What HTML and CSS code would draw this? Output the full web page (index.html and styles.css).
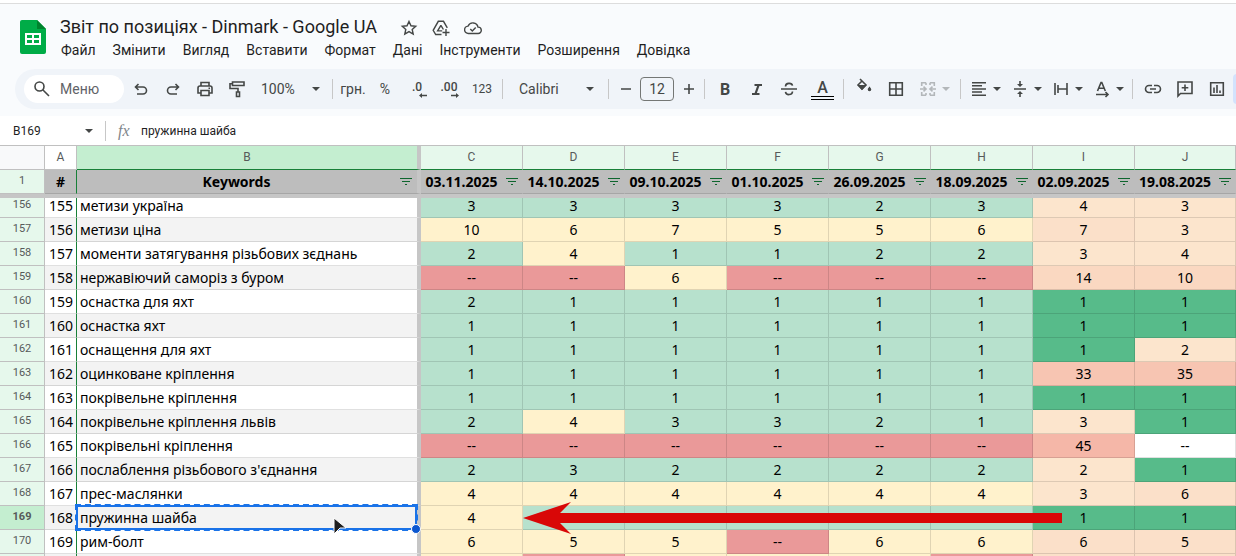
FILE: index.html
```
<!DOCTYPE html>
<html lang="uk">
<head>
    <meta charset="UTF-8">
    <meta name="viewport" content="width=device-width, initial-scale=1.0">
    <title>Звіт по позиціях - Dinmark - Google UA</title>
    <link rel="stylesheet" href="styles.css">
</head>
<body>
    <!-- Title and menus -->
    <header class="doc-header">
        <svg class="logo" viewBox="0 0 26 34" width="26" height="34">
            <path fill="#00ac47" d="M2 0h15l9 9v23a2 2 0 0 1-2 2H2a2 2 0 0 1-2-2V2a2 2 0 0 1 2-2z"/>
            <path fill="#00832d" d="M17 0l9 9h-9z"/>
            <path fill="#fff" fill-rule="evenodd" d="M5 13h16v12H5zM7 15v3h5v-3zM14 15v3h5v-3zM7 20v3h5v-3zM14 20v3h5v-3z"/>
        </svg>
        <div class="doc-info">
            <div class="title-row">
                <h1>Звіт по позиціях - Dinmark - Google UA</h1>
                <button class="title-btn" aria-label="Зірочка"><svg viewBox="0 0 18 18"><path class="line" d="M9 2.500l2 4.300 4.700.5-3.500 3.100 1 4.600L9 12.600 4.800 15l1-4.600-3.500-3.100 4.700-.5z"/></svg></button>
                <button class="title-btn" aria-label="Перемістити"><svg viewBox="0 0 18 18"><path class="line" d="M9.500 15.500H3.700L1.200 11.300 6.300 2.300h5.200l3.800 6.500M8.900 6.300l-3.300 5.600h4.600M8.900 6.300l2.500 4.200M14 10v7M10.500 13.500h7"/></svg></button>
                <button class="title-btn" aria-label="Статус документа"><svg viewBox="0 0 18 18"><path class="line" d="M4.500 14.500a3.700 3.700 0 0 1-.4-7.400 5.200 5.200 0 0 1 9.900 1 3.200 3.200 0 0 1 .2 6.400zM6.300 10l2 2 3.400-3.500"/></svg></button>
            </div>
            <nav class="menu">
                <a href="#">Файл</a>
                <a href="#">Змінити</a>
                <a href="#">Вигляд</a>
                <a href="#">Вставити</a>
                <a href="#">Формат</a>
                <a href="#">Дані</a>
                <a href="#">Інструменти</a>
                <a href="#">Розширення</a>
                <a href="#">Довідка</a>
            </nav>
        </div>
    </header>

    <!-- Toolbar -->
    <div class="toolbar">
        <label class="search">
            <svg viewBox="0 0 18 18"><path class="line bold" d="M11 6.500a4.500 4.500 0 1 1-9 0 4.500 4.500 0 0 1 9 0zM10 10l6 6"/></svg>
            <input type="text" placeholder="Меню" aria-label="Меню">
        </label>
        <button class="tool" aria-label="Скасувати"><svg viewBox="0 0 18 18"><path class="line bold" d="M6.500 4L3.500 7l3 3M3.700 7H11a3.300 3.300 0 0 1 0 7H5"/></svg></button>
        <button class="tool" aria-label="Повторити"><svg viewBox="0 0 18 18"><path class="line bold" d="M11.500 4l3 3-3 3M14.300 7H7a3.300 3.300 0 0 0 0 7h6"/></svg></button>
        <button class="tool" aria-label="Друк"><svg viewBox="0 0 18 18"><path class="line bold" d="M5 6V2.500h8V6M5 13H2V8a2 2 0 0 1 2-2h10a2 2 0 0 1 2 2v5h-3M5 10.500h8v5H5z"/><path d="M12.500 7.500h1.500V9h-1.500z"/></svg></button>
        <button class="tool" aria-label="Копіювати формат"><svg viewBox="0 0 18 18"><path class="line bold" d="M4.500 2h11.500v3.500H4.500zM4.500 3.700H2V8.500h8V12M8.500 12h3v4.500h-3z"/></svg></button>
        <span class="select zoom"><select aria-label="Масштаб"><option>100%</option></select></span>
        <span class="sep"></span>
        <button class="tool text">грн.</button>
        <button class="tool text">%</button>
        <button class="tool decimal" aria-label="Зменшити кількість десяткових знаків"><span>.0</span><svg viewBox="0 0 8 5"><path d="M0 2.500L3 0v1.700h5v1.600H3V5z"/></svg></button>
        <button class="tool decimal" aria-label="Збільшити кількість десяткових знаків"><span>.00</span><svg viewBox="0 0 8 5"><path d="M8 2.500L5 0v1.700H0v1.600h5V5z"/></svg></button>
        <button class="tool text small">123</button>
        <span class="sep"></span>
        <span class="select font"><select aria-label="Шрифт"><option>Calibri</option></select></span>
        <span class="sep"></span>
        <button class="tool step" aria-label="Зменшити розмір шрифту"><svg viewBox="0 0 18 18"><path d="M4 8.200h10v1.600H4z"/></svg></button>
        <input class="font-size" type="text" value="12" aria-label="Розмір шрифту">
        <button class="tool step" aria-label="Збільшити розмір шрифту"><svg viewBox="0 0 18 18"><path d="M4 8.200h4.200V4h1.600v4.200H14v1.600H9.800V14H8.200V9.800H4z"/></svg></button>
        <span class="sep"></span>
        <button class="tool glyph">B</button>
        <button class="tool" aria-label="Курсив"><svg viewBox="0 0 18 18"><path d="M6.500 4H14v2h-2.600l-2.500 7h2.600v2H4v-2h2.600l2.500-7H6.500z"/></svg></button>
        <button class="tool" aria-label="Закреслення"><svg viewBox="0 0 18 18"><path class="line bold" d="M1 9h16M5.500 6.500C5.500 2.500 12 2.500 12.500 5.700M5.500 11.800c.5 4 7 3.500 7-.3"/></svg></button>
        <button class="tool glyph color">A</button>
        <span class="sep"></span>
        <button class="tool" aria-label="Колір заливки"><svg class="fill-icon" viewBox="0 0 18 18"><path class="line bold" d="M5 1l6 6-4 4-4-4 4-4"/><path d="M2.500 7h9L7 12zM14.500 8.500s1.800 2 1.800 3a1.800 1.800 0 0 1-3.600 0c0-1 1.800-3 1.800-3z"/></svg></button>
        <button class="tool" aria-label="Межі"><svg viewBox="0 0 18 18"><path class="line bold" d="M2.700 2.700h12.600v12.600H2.700zM9 2.700v12.600M2.700 9h12.600"/></svg></button>
        <button class="tool split merge" aria-label="Об'єднати клітинки" disabled><svg viewBox="0 0 18 18"><path class="line bold" d="M7 2.700H2.700V6M11 2.700h4.300V6M2.700 12v3.300H7M15.300 12v3.300H11M7 2.700V5M11 2.700V5M7 15.300V13M11 15.300V13M1 9h5M17 9h-5M4.500 6.700L7 9l-2.500 2.300M13.500 6.700L11 9l2.500 2.300"/></svg></button>
        <span class="sep"></span>
        <button class="tool split" aria-label="Горизонтальне вирівнювання"><svg viewBox="0 0 18 18"><path d="M2 2h14v1.500H2zM2 5.100h10v1.500H2zM2 8.200h14v1.500H2zM2 11.300h10v1.500H2zM2 14.400h14v1.500H2z"/></svg></button>
        <button class="tool split" aria-label="Вертикальне вирівнювання"><svg viewBox="0 0 18 18"><path d="M3 8.200h12v1.600H3zM8.200 1h1.600v3H12L9 7 6 4h2.200zM8.200 17h1.600v-3H12l-3-3-3 3h2.200z"/></svg></button>
        <button class="tool split" aria-label="Перенесення тексту"><svg viewBox="0 0 18 18"><path class="line bold" d="M3 3v12M15 3v12M6 9h9M6 5v8"/></svg></button>
        <button class="tool split" aria-label="Поворот тексту"><svg viewBox="0 0 18 18"><path class="line bold" d="M4.500 11L8 2.500h.8l3.500 8.500M5.800 8.300h5.200M3 14.500h12M12.500 12l2.500 2.500-2.500 2.500"/></svg></button>
        <span class="sep"></span>
        <button class="tool" aria-label="Вставити посилання"><svg viewBox="0 0 18 18"><path class="line bold" d="M8 5.500H5a3.500 3.500 0 0 0 0 7h3M10 5.500h3a3.500 3.500 0 0 1 0 7h-3M6 9h6"/></svg></button>
        <button class="tool" aria-label="Додати коментар"><svg viewBox="0 0 18 18"><path class="line bold" d="M2 2h14v11.500H4.500L2 16zM9 4.500v6.500M5.700 7.700h6.600"/></svg></button>
        <button class="tool" aria-label="Вставити діаграму"><svg viewBox="0 0 18 18"><path class="line bold" d="M2.700 2.700h12.600v12.600H2.700zM6 7.500V13M9 5v8M12 10.500V13"/></svg></button>
        <button class="tool filter-on" aria-label="Фільтр"></button>
    </div>

    <!-- Formula bar -->
    <div class="formula-bar">
        <span class="select name-box"><input type="text" value="B169" aria-label="Поле назви"></span>
        <span class="sep"></span>
        <label class="fx" for="formula">fx</label>
        <input id="formula" type="text" value="пружинна шайба">
    </div>

    <!-- Sheet -->
    <main class="sheet">
        <table>
            <thead>
                <tr class="letters">
                    <th class="corner"></th>
                    <th class="col-a">A</th>
                    <th class="col-b">B</th>
                    <th>C</th>
                    <th>D</th>
                    <th>E</th>
                    <th>F</th>
                    <th>G</th>
                    <th>H</th>
                    <th>I</th>
                    <th>J</th>
                </tr>
                <tr class="titles" id="titles">
                    <th class="row-num">1</th>
                    <th class="col-a">#</th>
                </tr>
            </thead>
            <tbody id="rows"></tbody>
        </table>
        <div class="freeze"></div>
        <svg class="arrow" viewBox="0 0 540 32" width="540" height="32"><path fill="#d90707" d="M0 16L48 0 37 11H539v10H37l11 11z"/></svg>
        <svg class="cursor" viewBox="0 0 14 18" width="14" height="18"><path fill="#1f1f1f" stroke="#fff" d="M1 1l12 10H7l-6 6z"/></svg>
    </main>

    <script>
        const titles = ['Keywords', '03.11.2025', '14.10.2025', '09.10.2025', '01.10.2025', '26.09.2025', '18.09.2025', '02.09.2025', '19.08.2025'];

        // first number in the sheet is 155, it sits in row 156
        const firstRow = 156;
        const rows = [
            ['метизи україна', '3 3 3 3 2 3 4 3'],
            ['метизи ціна', '10 6 7 5 5 6 7 3'],
            ['моменти затягування різьбових зєднань', '2 4 1 1 2 2 3 4'],
            ['нержавіючий саморіз з буром', '-- -- 6 -- -- -- 14 10'],
            ['оснастка для яхт', '2 1 1 1 1 1 1 1'],
            ['оснастка яхт', '1 1 1 1 1 1 1 1'],
            ['оснащення для яхт', '1 1 1 1 1 1 1 2'],
            ['оцинковане кріплення', '1 1 1 1 1 1 33 35'],
            ['покрівельне кріплення', '1 1 1 1 1 1 1 1'],
            ['покрівельне кріплення львів', '2 4 3 3 2 1 3 1'],
            ['покрівельні кріплення', '-- -- -- -- -- -- 45 --'],
            ["послаблення різьбового з'єднання", '2 3 2 2 2 2 2 1'],
            ['прес-маслянки', '4 4 4 4 4 4 3 6'],
            ['пружинна шайба', '4 . . . . . 1 1'],
            ['рим-болт', '6 5 5 -- 6 6 6 5']
        ];

        function cellClass(value, col) {
            const n = Number(value);
            if (col > 5) {
                if (value === '--') return '';
                if (n === 1) return 'top';
                if (n < 5) return 'warm-1';
                if (n < 10) return 'warm-2';
                if (n < 20) return 'warm-3';
                return n < 40 ? 'warm-4' : 'warm-5';
            }
            if (value === '--') return 'bad';
            return n > 3 ? 'mid' : 'good';
        }

        const filterIcon = '<svg viewBox="0 0 12 8" width="12" height="8"><path d="M0 0h12v1H0zM2 3h8v1H2zM5 6h2v1H5z"/></svg>';
        document.getElementById('titles').innerHTML += titles.map((t, i) =>
            `<th class="${i === 0 ? 'col-b' : ''}"><div class="title-cell"><span>${t}</span>${filterIcon}</div></th>`).join('');

        document.getElementById('rows').innerHTML = rows.map((row, i) => {
            const num = firstRow + i;
            const cells = row[1].split(' ').map((v, col) =>
                `<td class="${cellClass(v, col)}">${v === '.' ? '' : v}</td>`).join('');
            const selected = num === 169;
            return `<tr class="${selected ? 'selected' : ''}"><th class="row-num">${num}</th>
                <td class="col-a">${num - 1}</td>
                <td class="col-b">${row[0]}${selected ? '<div class="selection"></div>' : ''}</td>${cells}</tr>`;
        }).join('') + '<tr><th class="row-num"></th><td class="col-a"></td><td class="col-b"></td>' +
            ['mid', 'bad', 'mid', 'mid', 'mid', 'bad', 'warm-2', 'warm-2'].map(c => `<td class="${c}"></td>`).join('') + '</tr>';
    </script>
</body>
</html>
```
FILE: styles.css
```
* {
    box-sizing: border-box;
}

body {
    margin: 0;
    height: 100vh;
    overflow: hidden;
    display: flex;
    flex-direction: column;
    font-family: Roboto, Arial, sans-serif;
    background-color: #f9fbfd;
    color: #1f1f1f;
}

button, input, select {
    font: inherit;
    color: inherit;
    border: none;
    background: none;
    padding: 0;
    margin: 0;
    min-width: 0;
}

svg {
    display: block;
    fill: #444746;
}

.line {
    fill: none;
    stroke: #444746;
    stroke-width: 1.4;
}

.bold {
    stroke-width: 1.6;
}

/* Title and menus */
.doc-header {
    display: flex;
    gap: 14px;
    padding: 13px 20px 0;
    border-top: 1px solid #ddd;
    box-shadow: 0 -3px #fff;
    margin-top: 3px;
}

.logo {
    margin-top: 3px;
}

.title-row {
    display: flex;
    align-items: center;
    height: 22px;
    gap: 14px;
}

h1 {
    margin: 0 9px 3px 0;
    font-size: 18px;
    font-weight: 400;
}

.title-btn, .title-btn svg {
    width: 18px;
    height: 18px;
}

.menu {
    display: flex;
    gap: 17px;
    padding-left: 1px;
    height: 30px;
    line-height: 23px;
}

.menu a {
    color: #1f1f1f;
    font-size: 14px;
    text-decoration: none;
}

/* Toolbar */
.toolbar {
    display: flex;
    align-items: center;
    flex-shrink: 0;
    height: 40px;
    margin-left: 15px;
    padding-left: 9px;
    border-radius: 20px 0 0 20px;
    background-color: #f0f4f9;
    color: #444746;
    overflow: hidden;
}

.search {
    display: flex;
    align-items: center;
    flex-shrink: 0;
    gap: 9px;
    width: 100px;
    height: 28px;
    padding-left: 9px;
    margin-right: 1px;
    border-radius: 14px;
    background-color: #fff;
    font-size: 14px;
}

.search input {
    width: 60px;
}

.search input::placeholder {
    color: #5f6368;
    opacity: 1;
}

.search svg, .tool svg {
    width: 18px;
    height: 18px;
    flex-shrink: 0;
}

.tool {
    display: flex;
    align-items: center;
    justify-content: center;
    flex-shrink: 0;
    width: 32px;
    height: 30px;
}

.text {
    font-size: 14px;
}

.small {
    font-size: 12px;
    width: 34px;
}

.decimal {
    flex-direction: column;
    align-items: center;
    font-size: 12px;
    font-weight: 500;
    line-height: 12px;
}

.tool.decimal svg {
    width: 8px;
    height: 5px;
    margin-left: 12px;
}

.step {
    width: 25px;
}

.glyph {
    font-size: 16px;
    font-weight: 700;
}

.color {
    flex-direction: column;
    width: 35px;
    font-weight: 500;
    line-height: 17px;
}

.color::after {
    content: "";
    width: 23px;
    height: 2px;
    border: solid #000;
    border-width: 1px 0;
}

.tool .fill-icon {
    margin-bottom: 4px;
}

.split {
    width: 41px;
    gap: 4px;
}

.split::after, .select::after {
    content: "";
    width: 0;
    margin: 0 1px;
    border: 4px solid transparent;
    border-top-color: #444746;
    border-bottom: none;
}

.merge {
    width: 45px;
    opacity: 0.35;
}

.sep {
    flex-shrink: 0;
    width: 1px;
    height: 20px;
    margin: 0 4px 0 3px;
    background-color: #c7c7c7;
}

.select {
    display: flex;
    align-items: center;
    flex-shrink: 0;
}

.select select, .select input {
    flex: 1;
    appearance: none;
}

.zoom {
    width: 76px;
    padding: 0 8px;
    font-size: 14px;
}

.font {
    width: 98px;
    padding: 0 10px 0 12px;
    font-size: 14px;
}

.font-size {
    width: 34px;
    height: 24px;
    margin: 0 2px;
    flex-shrink: 0;
    border: 1px solid #747775;
    border-radius: 4px;
    text-align: center;
    font-size: 14px;
}

.filter-on {
    border-radius: 4px;
    background-color: #d3e3fd;
}

/* Formula bar */
.formula-bar {
    display: flex;
    align-items: center;
    flex-shrink: 0;
    height: 29px;
    margin-top: 7px;
    padding-left: 13px;
    background-color: #fff;
    font-size: 12px;
}

.name-box {
    width: 89px;
    padding-right: 8px;
}

.fx {
    width: 31px;
    padding-left: 8px;
    color: #80868b;
    font-family: "Liberation Serif", serif;
    font-size: 16px;
    font-style: italic;
}

#formula {
    flex: 1;
}

/* Sheet */
.sheet {
    position: relative;
    flex: 1;
    overflow: hidden;
    background-color: #fff;
    border-top: 1px solid #c0c0c0;
}

table {
    width: 100%;
    table-layout: fixed;
    border-collapse: separate;
    border-spacing: 0;
    font-family: "Noto Sans", sans-serif;
    font-size: 14px;
    color: #000;
}

th, td {
    height: 24px;
    padding: 0;
    border: solid rgba(0, 0, 0, 0.12);
    border-width: 0 1px 1px 0;
    line-height: 23px;
    text-align: center;
    white-space: nowrap;
}

.letters th {
    width: 102px;
    font-family: Roboto, Arial, sans-serif;
    font-size: 12px;
    font-weight: 400;
    color: #575a5a;
    background-color: #e6f8ec;
    border-right-color: #c0c0c0;
    border-bottom-color: #188038;
}

.letters th:last-child {
    width: auto;
}

.letters .corner {
    width: 45px;
    background-color: #f8f9fa;
    border-bottom-color: #c0c0c0;
}

.letters .col-a {
    width: 32px;
    background-color: #fff;
    border-bottom-color: #c0c0c0;
}

.letters .col-b {
    width: 344px;
    background-color: #c4eed0;
}

.titles th {
    background-color: #bdbdbd;
    border-right-color: #bdbdbd;
}

.titles .col-a {
    border-right-color: #188038;
}

.titles .row-num {
    background-color: #e6f8ec;
    border-right-color: #c0c0c0;
}

.title-cell {
    display: flex;
    align-items: center;
}

.title-cell span {
    flex: 1;
}

.title-cell svg {
    margin: 0 4px;
    fill: #0d652d;
}

.col-b .title-cell {
    padding-right: 1px;
}

tr .row-num {
    font-family: Roboto, Arial, sans-serif;
    font-size: 11px;
    font-weight: 400;
    line-height: 21px;
    vertical-align: top;
    color: #575a5a;
    background-color: #e6f8ec;
    border-color: #c0c0c0;
}

.selected .row-num {
    font-weight: 700;
    background-color: #c4eed0;
}

tr .col-a {
    border-right-color: #188038;
}

.letters .col-a {
    border-right-color: #c0c0c0;
}

td.col-a {
    text-align: right;
    padding-right: 3px;
}

tr .col-b {
    border-right: 4px solid #c6c6c6;
}

td.col-b {
    position: relative;
    text-align: left;
    padding-left: 3px;
}

tbody tr:nth-child(even) .col-a, tbody tr:nth-child(even) .col-b {
    background-color: #f3f3f3;
}

.good { background-color: #b7e1cd; }
.mid { background-color: #fff2cc; }
.bad { background-color: #ea9999; }
.top { background-color: #57bb8a; }
.warm-1 { background-color: #fce5cd; }
.warm-2 { background-color: #fbe0c9; }
.warm-3 { background-color: #fad8c1; }
.warm-4 { background-color: #f7c5b2; }
.warm-5 { background-color: #f5b7a8; }

/* Frozen row divider, covers the top of the scrolled row */
.freeze {
    position: absolute;
    top: 48px;
    left: 0;
    right: 0;
    height: 4px;
    background-color: #c6c6c6;
}

.selection {
    position: absolute;
    z-index: 1;
    inset: -1px 0 -1px -1px;
    border: 2px solid #1a73e8;
    outline: 2px dashed #1a73e8;
    outline-offset: -1px;
}

.selection::after {
    content: "";
    position: absolute;
    right: -6px;
    bottom: -6px;
    box-sizing: border-box;
    width: 10px;
    height: 10px;
    border: 1px solid #fff;
    border-radius: 50%;
    background-color: #0b57d0;
}

.arrow {
    position: absolute;
    z-index: 1;
    left: 523px;
    top: 356px;
}

.cursor {
    position: absolute;
    z-index: 2;
    left: 333px;
    top: 371px;
}
```
